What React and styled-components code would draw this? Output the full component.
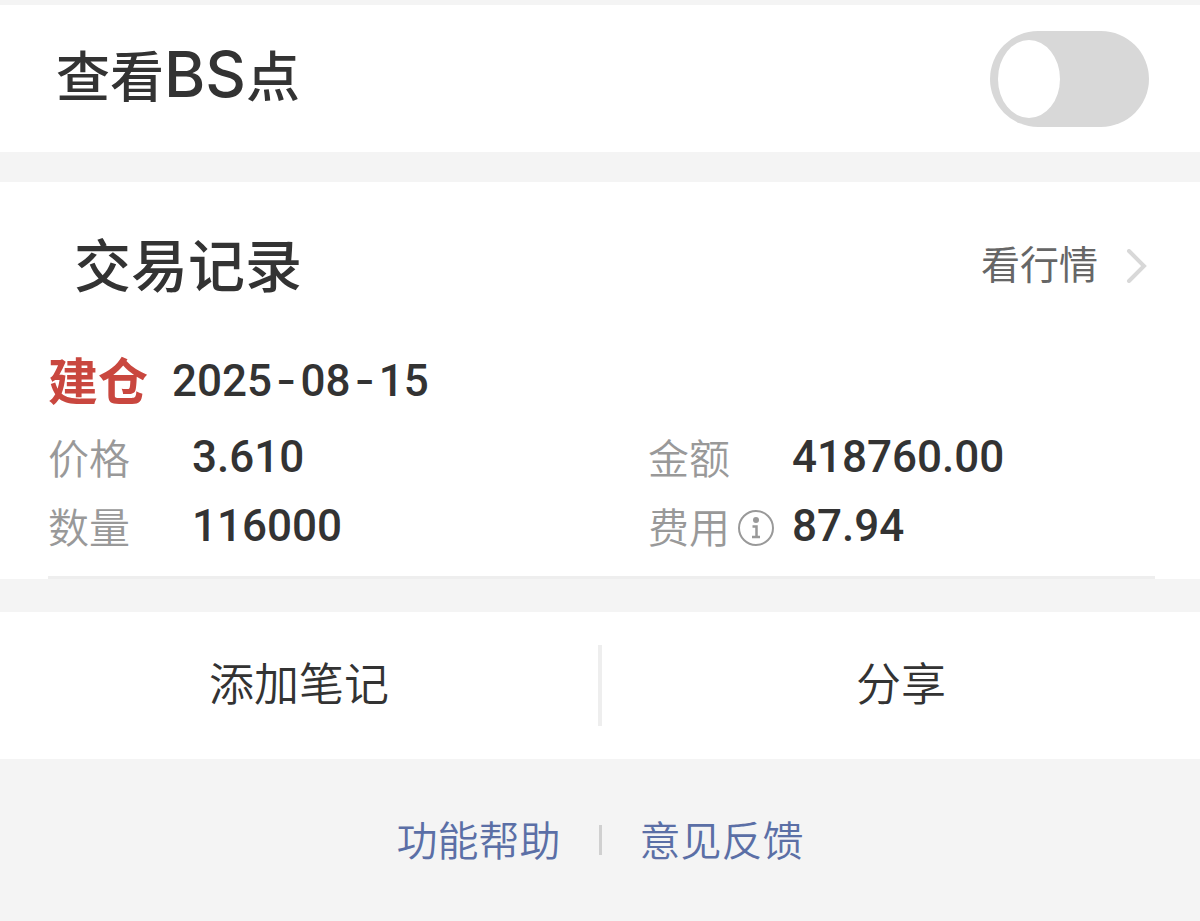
import React, { useState } from 'react';
import styled, { createGlobalStyle } from 'styled-components';

const GlobalStyle = createGlobalStyle`
  * {
    box-sizing: border-box;
  }
  body {
    margin: 0;
    background: #f4f4f4;
    color: #333;
    font-family: 'Noto Sans CJK SC', sans-serif;
  }
`;

const Page = styled.main`
  display: flex;
  flex-direction: column;
  padding-top: 5px;
`;

const Panel = styled.section`
  background: #fff;
`;

const SwitchRow = styled(Panel)`
  display: flex;
  align-items: center;
  justify-content: space-between;
  height: 147px;
  padding: 0 51px 0 56px;
  margin-bottom: 30px;
`;

const SwitchLabel = styled.label`
  padding-bottom: 10px;
  font-size: 54px;
  font-weight: 500;
  line-height: 80px;
`;

const Latin = styled.span`
  font-family: Inter, sans-serif;
  font-size: 63px;
`;

const Switch = styled.input`
  appearance: none;
  display: flex;
  align-items: center;
  width: 159px;
  height: 96px;
  margin: 0;
  padding: 0 8px;
  border-radius: 48px;
  background: #d8d8d8;
  cursor: pointer;
  &::before {
    content: '';
    width: 62px;
    height: 78px;
    border-radius: 50%;
    background: #fff;
  }
  &:checked {
    justify-content: flex-end;
    background: #c9473f;
  }
`;

const Records = styled(Panel)`
  margin-bottom: 33px;
`;

const RecordsHeader = styled.header`
  display: flex;
  align-items: center;
  justify-content: space-between;
  height: 166px;
  padding: 0 53px 6px 74px;
`;

const Title = styled.h2`
  margin: 0;
  font-size: 57px;
  font-weight: 500;
  line-height: 80px;
`;

const QuoteLink = styled.a`
  display: flex;
  align-items: flex-end;
  gap: 28px;
  color: #666;
  font-size: 39px;
  line-height: 42px;
  text-decoration: none;
`;

const RecordDate = styled.div`
  display: flex;
  align-items: center;
  gap: 24px;
  height: 68px;
  margin-bottom: 6px;
  padding: 0 0 4px 48px;
`;

const Tag = styled.strong`
  padding-bottom: 4px;
  color: #c9473f;
  font-size: 50px;
  font-weight: 700;
  line-height: 60px;
`;

const Time = styled.time`
  font-family: Roboto, sans-serif;
  font-size: 44px;
  font-weight: 500;
`;

const Dash = styled.span`
  padding: 0 4px;
  font-family: Inter, sans-serif;
`;

const Fields = styled.dl`
  display: grid;
  grid-template-columns: 1fr 1fr;
  margin: 0;
  padding-bottom: 16px;
`;

const Field = styled.div`
  display: flex;
  align-items: center;
  height: 69px;
  padding-left: 48px;
`;

const FieldName = styled.dt`
  display: flex;
  align-items: flex-end;
  gap: 8px;
  width: 144px;
  color: #999;
  font-size: 41px;
  font-weight: 350;
  line-height: 41px;
`;

const FieldValue = styled.dd`
  margin: 0;
  font-family: Roboto, sans-serif;
  font-size: 44px;
  font-weight: 500;
`;

const InfoButton = styled.button`
  display: flex;
  padding: 0;
  border: 0;
  background: none;
  cursor: pointer;
`;

const Rule = styled.hr`
  height: 3px;
  margin: 0 45px 0 48px;
  border: 0;
  background: #eee;
`;

const Actions = styled(Panel)`
  display: flex;
  align-items: center;
  height: 147px;
`;

const Action = styled.button`
  flex: 1;
  height: 100%;
  padding: 0 0 8px;
  border: 0;
  background: none;
  color: #333;
  font-family: inherit;
  font-size: 45px;
  font-weight: 350;
  cursor: pointer;
`;

const Divider = styled.span`
  width: ${({ $width }) => $width}px;
  height: ${({ $height }) => $height}px;
  background: ${({ $color }) => $color};
`;

const Footer = styled.footer`
  display: flex;
  align-items: center;
  justify-content: center;
  gap: 38px;
  height: 162px;
`;

const FooterLink = styled.a`
  padding-bottom: 4px;
  color: #5b6fa6;
  font-size: 41px;
  font-weight: 350;
  line-height: 60px;
  text-decoration: none;
`;

const Chevron = () => (
  <svg width="21" height="34" viewBox="0 0 21 34" fill="none" aria-hidden="true">
    <path d="M3 2 L18 17 L3 32" stroke="#d8d8d8" strokeWidth="4" strokeLinecap="round" />
  </svg>
);

const InfoIcon = () => (
  <svg width="36" height="36" viewBox="0 0 36 36" fill="none" aria-hidden="true">
    <circle cx="18" cy="18" r="17" stroke="#999" strokeWidth="2" />
    <circle cx="18" cy="10" r="3" fill="#999" />
    <path d="M14.5 16.5 H18.5 V27 M14 27 H22" stroke="#999" strokeWidth="2.5" />
  </svg>
);

const fields = [
  { name: '价格', value: '3.610' },
  { name: '金额', value: '418760.00' },
  { name: '数量', value: '116000' },
  { name: '费用', value: '87.94', info: true }
];

const App = () => {
  const [checked, setChecked] = useState(false);

  return (
    <>
      <GlobalStyle />
      <Page>
        <SwitchRow>
          <SwitchLabel htmlFor="bs">
            查看<Latin>BS</Latin>点
          </SwitchLabel>
          <Switch
            id="bs"
            type="checkbox"
            checked={checked}
            onChange={() => setChecked(!checked)}
          />
        </SwitchRow>
        <Records>
          <RecordsHeader>
            <Title>交易记录</Title>
            <QuoteLink href="#quote">
              看行情
              <Chevron />
            </QuoteLink>
          </RecordsHeader>
          <RecordDate>
            <Tag>建仓</Tag>
            <Time dateTime="2025-08-15">
              2025<Dash>-</Dash>08<Dash>-</Dash>15
            </Time>
          </RecordDate>
          <Fields>
            {fields.map(({ name, value, info }) => (
              <Field key={name}>
                <FieldName>
                  {name}
                  {info && (
                    <InfoButton type="button" aria-label={name}>
                      <InfoIcon />
                    </InfoButton>
                  )}
                </FieldName>
                <FieldValue>{value}</FieldValue>
              </Field>
            ))}
          </Fields>
          <Rule />
        </Records>
        <Actions>
          <Action type="button">添加笔记</Action>
          <Divider $width={4} $height={81} $color="#eee" />
          <Action type="button">分享</Action>
        </Actions>
        <Footer>
          <FooterLink href="#help">功能帮助</FooterLink>
          <Divider $width={3} $height={30} $color="#d0d0d0" />
          <FooterLink href="#feedback">意见反馈</FooterLink>
        </Footer>
      </Page>
    </>
  );
};

export default App;
